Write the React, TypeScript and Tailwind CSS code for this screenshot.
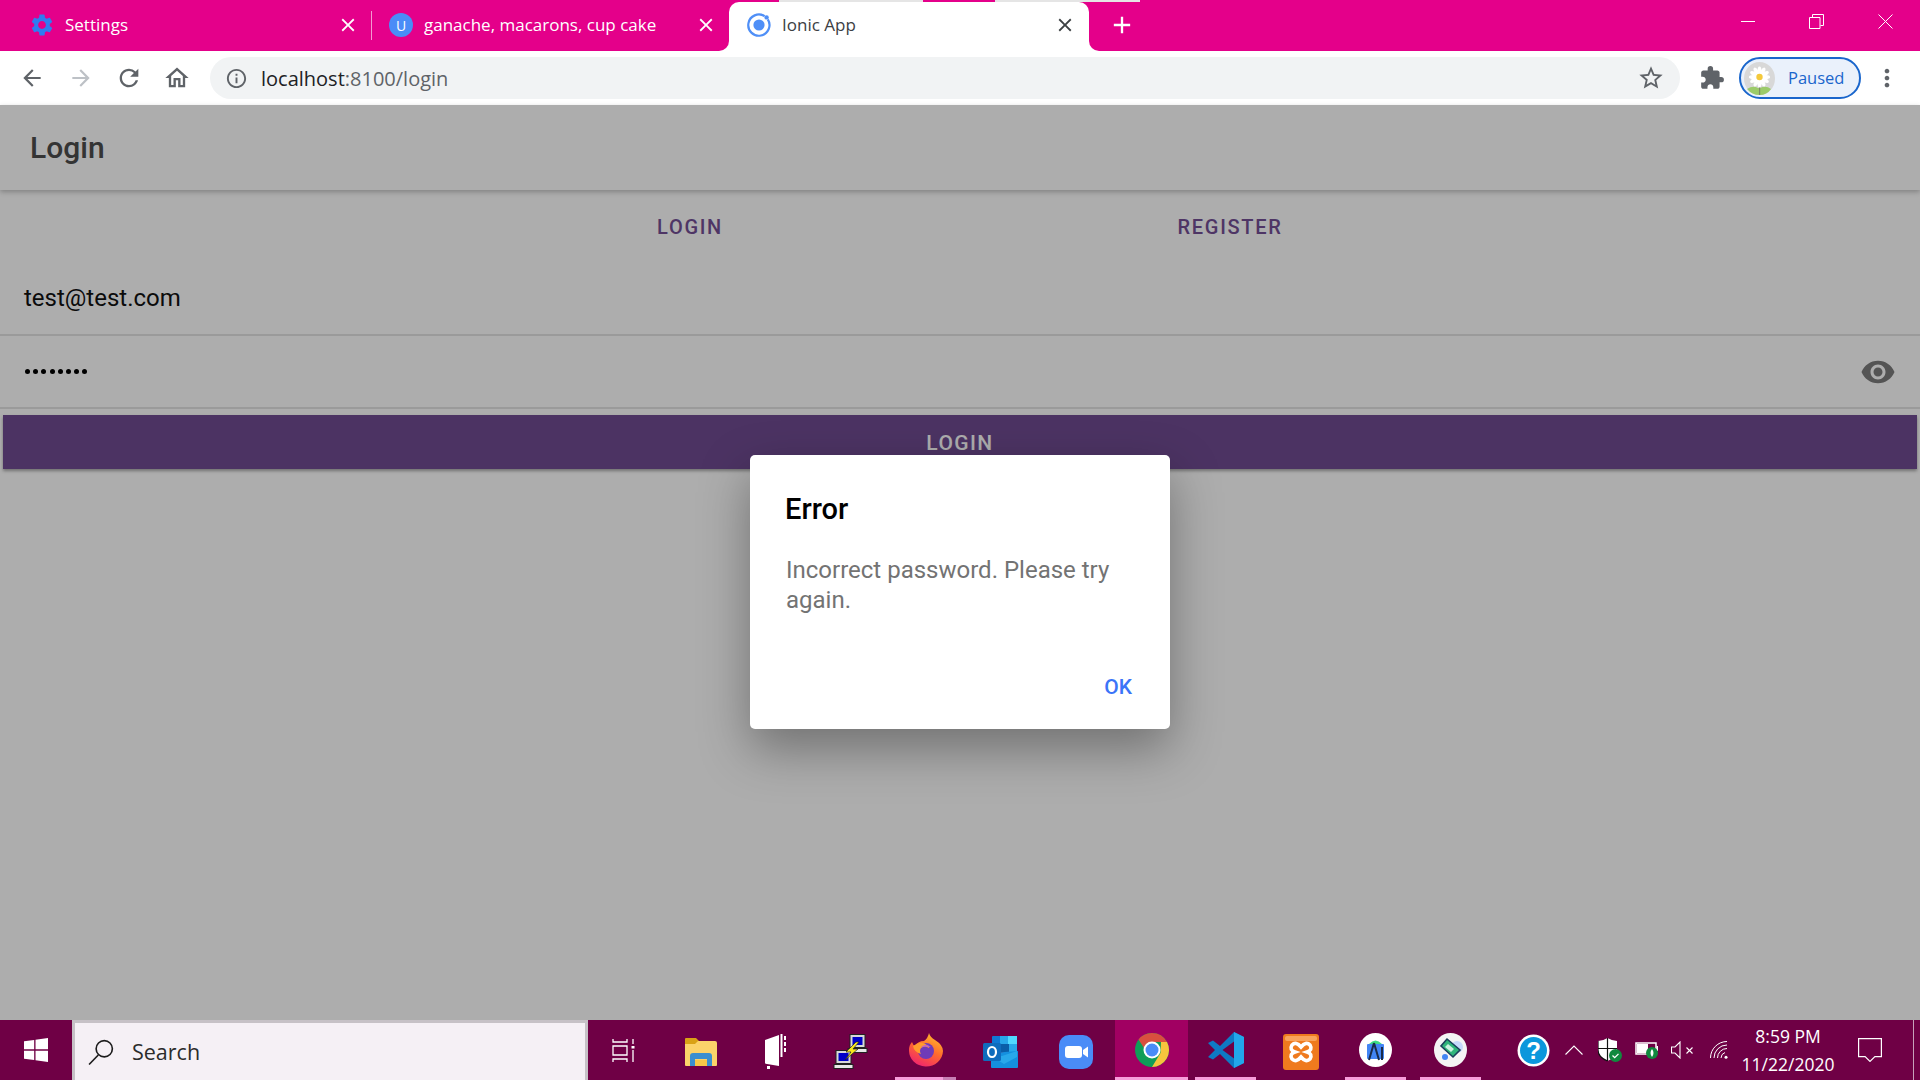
import { MdArrowBack, MdArrowForward, MdRefresh, MdOutlineHome, MdInfoOutline, MdStarBorder, MdExtension, MdMoreVert, MdSettings, MdRemoveRedEye, MdClose, MdAdd } from "react-icons/md";

function IonicLogo() {
  return (
    <svg width="24" height="24" viewBox="0 0 24 24">
      <circle cx="12" cy="12" r="5.6" fill="#4f8ff7" />
      <path d="M17.6 3.2A10.6 10.6 0 1 0 20.8 6.4" fill="none" stroke="#4f8ff7" strokeWidth="2.2" />
      <circle cx="19.6" cy="4.4" r="2.2" fill="#4f8ff7" />
    </svg>
  );
}

function Daisy() {
  const petals = [0, 30, 60, 90, 120, 150, 180, 210, 240, 270, 300, 330];
  return (
    <svg width="31" height="33" viewBox="0 0 31 33">
      <ellipse cx="15.5" cy="16.5" rx="15.5" ry="16.5" fill="#d8d8d8" />
      <path d="M3 27q6-4 11-1l2 0q6-3 11 1-4 6-11.5 6T3 27z" fill="#9ccb6a" />
      <rect x="15" y="16" width="1.2" height="17" fill="#7c8a66" />
      {petals.map((a) => (
        <ellipse key={a} cx="15.5" cy="9" rx="2" ry="4.6" fill="#fff" transform={`rotate(${a} 15.5 15)`} />
      ))}
      <circle cx="15.5" cy="15" r="3.2" fill="#f4c93c" />
    </svg>
  );
}

function WindowsLogo() {
  return (
    <svg width="24" height="24" viewBox="0 0 25 25" fill="#fff">
      <path d="M0 3.5 10.6 2v9.8H0zM12 1.8 25 0v11.8H12zM0 13.2h10.6V23L0 21.5zM12 13.2h13V25l-13-1.8z" />
    </svg>
  );
}

function SearchGlyph() {
  return (
    <svg width="26" height="26" viewBox="0 0 24 24" fill="none" stroke="#1c1c1c" strokeWidth="1.5">
      <circle cx="15" cy="9" r="7.5" />
      <path d="M9.5 14.8 1 23.5" />
    </svg>
  );
}

function TaskView() {
  return (
    <svg width="24" height="23" viewBox="0 0 24 23" fill="none" stroke="#fff" strokeWidth="1.3">
      <path d="M1 0v3h14V0M1 7h14v9H1zM1 23v-3h14v3" />
      <path d="M21 0v5M21 11v12" />
      <rect x="19.5" y="7" width="3" height="2.5" fill="#fff" stroke="none" />
    </svg>
  );
}

function FolderIcon() {
  return (
    <svg width="32" height="28" viewBox="0 0 32 28">
      <path d="M0 1q0-1 1-1h10l3 3H0z" fill="#d9a216" />
      <path d="M0 3h30q2 0 2 2v22q0 1-1 1H1q-1 0-1-1z" fill="#fbd36a" />
      <path d="M0 3h13l-3 3H0z" fill="#d9a216" />
      <path d="M5 28V18q0-3 3-3h16q3 0 3 3v10h-5v-7H10v7z" fill="#3a8fd0" />
      <rect x="10" y="22" width="12" height="6" fill="#f6c748" />
    </svg>
  );
}

function BookIcon() {
  return (
    <svg width="21" height="36" viewBox="0 0 21 36" fill="#fff">
      <path d="M0 6 14 1v31L2 30q-2 0-2-1z" />
      <rect x="15.5" y="0" width="2" height="23" />
      <rect x="19" y="2" width="2" height="4" />
      <rect x="19" y="8" width="2" height="4" />
      <rect x="19" y="14" width="2" height="4" />
      <rect x="2" y="32" width="3" height="3" />
    </svg>
  );
}

function PuttyIcon() {
  const monitor = (x: number, y: number) => (
    <g>
      <rect x={x} y={y} width="15" height="13" fill="#d8d8d8" stroke="#222" />
      <rect x={x + 2.5} y={y + 2.5} width="10" height="8" fill="#0000c8" />
      <rect x={x - 2} y={y + 14} width="19" height="4" fill="#e8e8e8" stroke="#222" />
    </g>
  );
  return (
    <svg width="36" height="35" viewBox="0 0 36 35">
      {monitor(17, 0.5)}
      {monitor(3, 16.5)}
      <path d="M23 8 13 18h5l-6 8 13-11h-5l6-7z" fill="#f8e71c" stroke="#222" strokeWidth="0.7" />
    </svg>
  );
}

function FirefoxIcon() {
  return (
    <svg width="34" height="34" viewBox="0 0 34 34">
      <defs>
        <linearGradient id="ff" x1="0.8" y1="0" x2="0.3" y2="1">
          <stop offset="0" stopColor="#ffc02e" />
          <stop offset="0.5" stopColor="#ff6a2c" />
          <stop offset="1" stopColor="#f0246e" />
        </linearGradient>
      </defs>
      <path d="M20 0q1 4 6 7 8 5 8 11a17 16 0 0 1-34-1q0-5 3-8 1 3 3 4 3-5 9-5 4-3 5-8z" fill="url(#ff)" />
      <circle cx="17" cy="18" r="8" fill="#6f3bb8" />
      <path d="M4 13q8-6 14-1 3 2 2 3-4-3-8 0-2 3 0 6-7-2-8-8z" fill="#ff9b2e" />
      <path d="M12 14q5-4 10 0-5-1-10 0z" fill="#b65bd9" />
    </svg>
  );
}

function OutlookIcon() {
  return (
    <svg width="35" height="32" viewBox="0 0 35 32">
      <rect x="9" y="0" width="25" height="16" rx="1" fill="#0f78d4" />
      <rect x="25" y="0" width="9" height="8" fill="#50d9ff" />
      <rect x="17" y="0" width="8" height="8" fill="#28a8ea" />
      <rect x="17" y="8" width="9" height="8" fill="#0a5ea8" />
      <rect x="26" y="8" width="8" height="8" fill="#28a8ea" />
      <path d="M8 17 35 15v16q0 1-1 1H9q-1 0-1-1z" fill="#1490df" />
      <path d="M8 20h11l15-5v6L21 28z" fill="#28a8ea" />
      <rect x="0" y="7" width="18" height="18" rx="1.5" fill="#0f6cbd" />
      <ellipse cx="9" cy="16" rx="4" ry="5" fill="none" stroke="#fff" strokeWidth="2.2" />
    </svg>
  );
}

function ZoomIcon() {
  return (
    <svg width="34" height="34" viewBox="0 0 34 34">
      <rect width="34" height="34" rx="10" fill="#4a8cf7" />
      <rect x="6" y="11" width="17" height="12" rx="3" fill="#fff" />
      <path d="m24 15 5-3.5v11L24 19z" fill="#fff" />
    </svg>
  );
}

function ChromeIcon() {
  return (
    <svg width="34" height="34" viewBox="0 0 34 34">
      <circle cx="17" cy="17" r="17" fill="#0f9d58" />
      <path d="M32 9A17 17 0 0 1 17 34l8.5-14 .5-11z" fill="#f7c43d" />
      <path d="M17 0a17 17 0 0 1 15 9H17a8.5 8.5 0 0 0-8 6L3.5 6.5A17 17 0 0 1 17 0z" fill="#d9503f" />
      <circle cx="17" cy="17" r="8.5" fill="#fff" />
      <circle cx="17" cy="17" r="6.5" fill="#4a8cf7" />
    </svg>
  );
}

function VsCodeIcon() {
  return (
    <svg width="36" height="36" viewBox="0 0 36 36">
      <path d="M26 0 36 5v26l-10 5-14-14-7 5.5L0 25l7-7-7-7 5-2.5L12 14z" fill="#0e7ac4" />
      <path d="M26 0 36 5v26l-10 5z" fill="#22a7ea" />
      <path d="M26 9.5 14.5 18 26 26.5z" fill="#6f0045" />
    </svg>
  );
}

function XamppIcon() {
  return (
    <svg width="36" height="36" viewBox="0 0 36 36">
      <rect width="36" height="36" rx="3" fill="#ef7a1e" />
      <rect x="2" y="2" width="32" height="5" rx="2" fill="#f9a45c" />
      <path d="M9 11q4-4 9 2 5-6 9-2 3 5-3 7 6 2 3 7-4 4-9-2-5 6-9 2-3-5 3-7-6-2-3-7z" fill="none" stroke="#fff" strokeWidth="3.6" />
    </svg>
  );
}

function StudioIcon() {
  return (
    <svg width="33" height="34" viewBox="0 0 33 34">
      <ellipse cx="16.5" cy="17" rx="16.5" ry="17" fill="#fff" />
      <path d="M10 11q6.5-7 13 0z" fill="#3ddc84" />
      <rect x="8" y="11" width="17" height="15" rx="1" fill="#4285f4" />
      <path d="M15 10 10 27M15 10l5 17M23 14v13" stroke="#1a2b4a" strokeWidth="2" fill="none" />
    </svg>
  );
}

function DeviceIcon() {
  return (
    <svg width="33" height="34" viewBox="0 0 33 34">
      <ellipse cx="16.5" cy="17" rx="16.5" ry="17" fill="#f4f4f4" />
      <circle cx="23" cy="14" r="6" fill="#c7d8fb" />
      <path d="M13 6 26 17 19 24 7 13z" fill="#2fb57a" stroke="#1a3f5a" strokeWidth="1.6" />
      <path d="M14 11l6 5-3 3-6-5z" fill="#c9f2df" />
      <circle cx="11" cy="24" r="3" fill="#4285f4" />
    </svg>
  );
}

function HelpIcon() {
  return (
    <svg width="33" height="33" viewBox="0 0 33 33">
      <circle cx="16.5" cy="16.5" r="16" fill="#fff" />
      <circle cx="16.5" cy="16.5" r="13.5" fill="#0b97dc" />
      <text x="16.5" y="25" textAnchor="middle" fontSize="24" fontWeight="700" fill="#fff" fontFamily="Liberation Sans, sans-serif">?</text>
    </svg>
  );
}

function TrayIcons() {
  return (
    <>
      <svg width="18" height="10" viewBox="0 0 18 10" fill="none" stroke="#fff" strokeWidth="1.1" className="ml-[15px]">
        <path d="m.5 9.5 8.5-8.5 8.5 8.5" />
      </svg>
      <svg width="24" height="24" viewBox="0 0 24 24" className="ml-[15px]">
        <path d="M9.5 0q5 3 9.5 3v9q0 7-9.5 11Q0 19 0 12V3q5 0 9.5-3z" fill="#fff" />
        <path d="M9.5 0v23M0 10.5h19" stroke="#111" strokeWidth="1.2" />
        <path d="M0 3v9q0 7 9.5 11" fill="none" stroke="#111" strokeWidth="1.2" />
        <circle cx="17.5" cy="17.5" r="6.5" fill="#10893e" />
        <path d="m14.5 17.5 2.2 2.2 3.8-3.8" stroke="#fff" strokeWidth="1.3" fill="none" />
      </svg>
      <svg width="24" height="17" viewBox="0 0 24 17" className="ml-[13px]">
        <rect x="1" y="1" width="20" height="11" fill="#6f0045" stroke="#fff" strokeWidth="1.5" />
        <rect x="2" y="2" width="11" height="9" fill="#fff" />
        <rect x="21.5" y="4" width="1.5" height="5" fill="#fff" />
        <circle cx="17" cy="11" r="6" fill="#10893e" />
        <path d="M17 7q3 4 0 8-3-4 0-8z" fill="#fff" />
      </svg>
      <svg width="22" height="18" viewBox="0 0 22 18" fill="none" stroke="#fff" strokeWidth="1.1" className="ml-[12px]">
        <path d="M.5 6v6h3.5l5 5V1L4 6z" />
        <path d="m15.5 6.5 6 6M21.5 6.5l-6 6" />
      </svg>
      <svg width="18" height="18" viewBox="0 0 18 18" fill="none" stroke="#fff" strokeWidth="1" className="ml-[17px]">
        <path d="M.5 17A16.5 16.5 0 0 1 17 .5M4 17A13 13 0 0 1 17 4M7.5 17A9.5 9.5 0 0 1 17 7.5M11 17a6 6 0 0 1 4-5.5" />
        <circle cx="16" cy="16.3" r="1.5" fill="#fff" stroke="none" />
      </svg>
    </>
  );
}

const taskIcons = [
  { key: "folder", icon: <FolderIcon /> },
  { key: "book", icon: <BookIcon /> },
  { key: "putty", icon: <PuttyIcon /> },
  { key: "firefox", icon: <FirefoxIcon />, bar: true, stacked: true },
  { key: "outlook", icon: <OutlookIcon /> },
  { key: "zoom", icon: <ZoomIcon /> },
  { key: "chrome", icon: <ChromeIcon />, bar: true, active: true },
  { key: "vscode", icon: <VsCodeIcon />, bar: true },
  { key: "xampp", icon: <XamppIcon /> },
  { key: "studio", icon: <StudioIcon />, bar: true },
  { key: "device", icon: <DeviceIcon />, bar: true },
];

export default function App() {
  return (
    <div className="flex h-[1080px] w-[1920px] flex-col overflow-hidden bg-white font-['Roboto',sans-serif]">
      {/* Tab strip */}
      <div className="relative flex h-[51px] shrink-0 bg-white font-['Open_Sans',sans-serif] text-[17px]">
        <div className="flex w-[729px] rounded-br-[10px] bg-[#e4008a] text-white">
          <div className="flex w-[371px] items-center pb-[1px] pl-[29px]">
            <MdSettings className="h-[26px] w-[26px] text-[#2f7cf0]" />
            <span className="ml-[10px]">Settings</span>
            <MdClose className="ml-auto mr-[12px] h-[22px] w-[22px]" />
          </div>
          <div className="my-[11px] w-px bg-[#f29ad0]" />
          <div className="flex flex-1 items-center pb-[1px] pl-[17px]">
            <span className="flex h-[24px] w-[24px] items-center justify-center rounded-full bg-[#4a8cf7] text-[14px]">U</span>
            <span className="ml-[11px]">ganache, macarons, cup cake</span>
            <MdClose className="ml-auto mr-[12px] h-[22px] w-[22px]" />
          </div>
        </div>
        <div className="w-[360px] bg-[#e4008a]">
          <div className="mt-[2px] flex h-[49px] items-center rounded-t-[10px] bg-white pb-[3px] pl-[18px] text-[#3c4043]">
            <IonicLogo />
            <span className="ml-[11px]">Ionic App</span>
            <MdClose className="ml-auto mr-[13px] h-[22px] w-[22px] text-[#3c4043]" />
          </div>
        </div>
        <div className="flex flex-1 items-center rounded-bl-[10px] bg-[#e4008a] pl-[19px] text-white">
          <MdAdd className="mb-[1px] h-[28px] w-[28px]" />
          <div className="ml-auto flex items-center pb-[9px]">
            <div className="h-px w-[14px] bg-white" />
            <svg width="15" height="15" viewBox="0 0 15 15" fill="none" stroke="#fff" className="ml-[54px]">
              <path d="M.5 3.5h10.5v11H.5zM3.5 3V.5h11v11h-3" />
            </svg>
            <svg width="15" height="15" viewBox="0 0 15 15" fill="none" stroke="#fff" className="ml-[54px] mr-[27px]">
              <path d="m.5.5 14 14M14.5.5l-14 14" />
            </svg>
          </div>
        </div>
        {/* loading sliver along the top of the active tab */}
        <div className="absolute left-[779px] top-0 flex h-[2px] w-[361px]">
          <div className="w-[144px] bg-[#e5e5e5]" />
          <div className="w-[72px] bg-[#e4008a]" />
          <div className="flex-1 bg-[#e5e5e5]" />
        </div>
      </div>

      {/* Address bar row */}
      <div className="flex h-[54px] shrink-0 items-center text-[#5f6368]">
        <MdArrowBack className="ml-[19px] h-[26px] w-[26px]" />
        <MdArrowForward className="ml-[23px] h-[26px] w-[26px] text-[#bdc1c6]" />
        <MdRefresh className="ml-[21px] h-[28px] w-[28px]" />
        <MdOutlineHome className="ml-[20px] h-[28px] w-[28px]" />
        <div className="ml-[19px] flex h-[42px] w-[1470px] items-center rounded-full bg-[#f1f3f4] pl-[15px] pr-[15px] font-['Open_Sans',sans-serif] text-[20px]">
          <MdInfoOutline className="h-[23px] w-[23px]" />
          <span className="ml-[13px] pt-[1px] text-[#202124]">localhost</span>
          <span className="pt-[1px]">:8100/login</span>
          <MdStarBorder className="ml-auto h-[28px] w-[28px]" />
        </div>
        <MdExtension className="ml-[19px] h-[26px] w-[26px]" />
        <div className="ml-[14px] flex h-[42px] w-[122px] items-center overflow-hidden rounded-full border-2 border-[#1a66cc] bg-[#eaf1fb] pl-[3px] font-['Open_Sans',sans-serif] text-[16.5px] text-[#1a66cc]">
          <Daisy />
          <span className="ml-[13px]">Paused</span>
        </div>
        <MdMoreVert className="ml-[12px] h-[28px] w-[28px]" />
      </div>

      {/* Login page, dimmed by the alert's backdrop */}
      <div className="relative flex flex-1 flex-col bg-white">
        <div className="flex h-[85px] shrink-0 items-center pl-[30px] text-[30px] font-medium text-[#4d4d4d] shadow-[0_2px_5px_rgba(0,0,0,0.25)]">
          Login
        </div>
        <div className="mx-auto grid h-[73px] w-[1080px] shrink-0 grid-cols-2 items-center pt-[1px] text-[20px] font-medium tracking-[1.7px] text-[#734e96]">
          <div className="text-center">LOGIN</div>
          <div className="text-center">REGISTER</div>
        </div>
        <div className="flex h-[73px] shrink-0 items-center border-b-2 border-[#e3e3e3] pb-[2px] pl-[24px] text-[24px] text-[#111]">
          test@test.com
        </div>
        <div className="flex h-[73px] shrink-0 items-center border-b-2 border-[#e3e3e3] pl-[25px] pr-[24px] text-black">
          <div className="flex gap-[3.2px]">
            {[0, 1, 2, 3, 4, 5, 6, 7].map((i) => (
              <span key={i} className="h-[5px] w-[5px] rounded-full bg-black" />
            ))}
          </div>
          <MdRemoveRedEye className="ml-auto h-[36px] w-[36px] text-[#7d7d7d]" />
        </div>
        <div className="mx-[3px] mt-[6px] flex h-[54px] shrink-0 items-center justify-center bg-[#714c93] pt-[3px] text-[21px] font-medium tracking-[1.4px] text-white shadow-[0_2px_3px_rgba(0,0,0,0.35)]">
          LOGIN
        </div>

        <div className="absolute inset-0 flex items-center justify-center bg-black/[0.32] pt-[58px]">
          <div className="flex h-[274px] w-[420px] flex-col rounded-[5px] bg-white px-[36px] pt-[36px] shadow-[0_20px_50px_rgba(0,0,0,0.35)]">
            <div className="-ml-[1px] text-[29px] font-medium leading-[36px] text-black">Error</div>
            <div className="mt-[28px] text-[24px] leading-[30px] text-[#737373]">Incorrect password. Please try again.</div>
            <div className="ml-auto mr-[2px] mt-[57px] text-[21px] font-medium text-[#3b74f8]">OK</div>
          </div>
        </div>
      </div>

      {/* Windows taskbar */}
      <div className="flex h-[60px] shrink-0 items-center bg-[#6f0045]">
        <div className="flex w-[72px] justify-center">
          <WindowsLogo />
        </div>
        <div className="flex h-full w-[516px] items-center border-[3px] border-b-0 border-[#c6c1c6] bg-[#f5f0f5] pl-[13px] font-['Open_Sans',sans-serif] text-[21.5px] text-[#2b2b2b]">
          <SearchGlyph />
          <span className="ml-[18px] pt-[1px]">Search</span>
        </div>
        <div className="flex w-[75px] justify-center pr-[3px]">
          <TaskView />
        </div>
        <div className="flex h-full">
          {taskIcons.map((t) => (
            <div key={t.key} className={`flex h-full w-[75px] justify-center ${t.active ? "pl-[2px]" : ""}`}>
              <div className={`flex h-full flex-col items-center justify-end ${t.active ? "w-full bg-[#a10062]" : "w-[61px]"}`}>
                <div className="flex flex-1 items-center justify-center pt-[3px]">{t.icon}</div>
                {t.bar ? (
                  <div className={`flex h-[3px] w-full bg-[#f79ddb] ${t.stacked ? "justify-end" : ""}`}>
                    {t.stacked ? <div className="h-full w-[13px] bg-[#c77fb5]" /> : null}
                  </div>
                ) : null}
              </div>
            </div>
          ))}
        </div>
        <div className="ml-[29px] flex h-full items-center">
          <HelpIcon />
          <TrayIcons />
        </div>
        <div className="ml-[14px] flex w-[92px] flex-col items-center font-['Open_Sans',sans-serif] text-[17.5px] leading-[28px] text-white">
          <span>8:59 PM</span>
          <span>11/22/2020</span>
        </div>
        <svg width="24" height="24" viewBox="0 0 24 24" fill="none" stroke="#fff" strokeWidth="1.2" className="ml-[24px]">
          <path d="M.6.6h22.8v18h-6.5L12 23.4 7.1 18.6H.6z" />
        </svg>
        <div className="ml-auto mr-[6px] h-full w-px bg-[#c8a0ba]" />
      </div>
    </div>
  );
}
